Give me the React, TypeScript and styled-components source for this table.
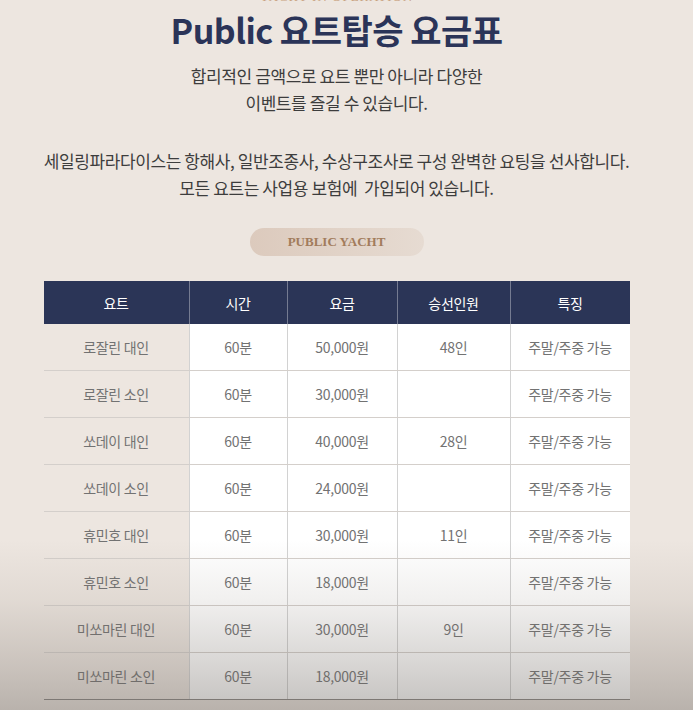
import * as React from 'react'
import styled, { createGlobalStyle } from 'styled-components'

const GlobalStyle = createGlobalStyle`
  html, body {
    margin: 0;
    padding: 0;
    background: #ede6e0;
  }
  body {
    font-family: "Noto Sans CJK KR", "Noto Sans", sans-serif;
  }
`

const Page = styled.div`
  position: relative;
  width: 693px;
  height: 710px;
  overflow: hidden;
  background: #ede6e0;
`

// content column is a bit narrower than the window (scrollbar gutter in the original)
const Column = styled.div`
  width: 673px;
  display: flex;
  flex-direction: column;
  align-items: center;
`

const Eyebrow = styled.div`
  margin-top: -10px;
  height: 12px;
  line-height: 14px;
  font-family: "Liberation Serif", serif;
  font-size: 13px;
  letter-spacing: 1px;
  color: #c8a27f;
`

const Title = styled.h1`
  margin: 8px 0 0 0;
  font-family: "Noto Sans CJK KR", sans-serif;
  font-size: 34px;
  font-weight: 700;
  line-height: 40px;
  letter-spacing: -0.5px;
  color: #2b3458;
`

const Lead = styled.p<{ $gap: number }>`
  margin: ${p => p.$gap}px 0 0 0;
  text-align: center;
  font-size: 17px;
  line-height: 27px;
  letter-spacing: -0.4px;
  color: #3d3d3d;
`

const Pill = styled.div`
  margin-top: 27px;
  width: 174px;
  height: 28px;
  border-radius: 14px;
  background: linear-gradient(90deg, #dccabd 0%, #e2d4c9 60%, #e6dbd2 100%);
  display: flex;
  align-items: center;
  justify-content: center;
  font-family: "Liberation Serif", serif;
  font-weight: 700;
  font-size: 13px;
  color: #a27c5c;
`

const Table = styled.table`
  margin-top: 25px;
  width: 586px;
  border-collapse: collapse;
  table-layout: fixed;
`

const Th = styled.th<{ $w: number }>`
  width: ${p => p.$w}px;
  height: 43px;
  background: #2b3557;
  color: #fff;
  font-weight: 400;
  font-size: 14px;
  letter-spacing: -0.3px;
  border-left: 1px solid rgba(255, 255, 255, 0.35);
  padding: 0;
  &:first-child {
    border-left: none;
  }
`

const Td = styled.td<{ $head?: boolean }>`
  height: 46px;
  padding: 0;
  text-align: center;
  font-size: 14px;
  letter-spacing: -0.3px;
  color: #727272;
  background: ${p => (p.$head ? 'transparent' : '#ffffff')};
  border-bottom: 1px solid #d4cfcb;
  border-left: ${p => (p.$head ? 'none' : '1px solid #d2d2d2')};
`

const Row = styled.tr`
  &:last-child td {
    border-bottom: 1px solid #8a8683;
  }
`

const Shade = styled.div`
  position: absolute;
  left: 0;
  right: 0;
  bottom: 0;
  height: 170px;
  pointer-events: none;
  background: linear-gradient(
    180deg,
    rgba(120, 110, 100, 0) 0%,
    rgba(120, 110, 100, 0.1) 35%,
    rgba(110, 102, 95, 0.28) 75%,
    rgba(100, 94, 88, 0.38) 100%
  );
`

const cols = [
  { label: '요트', w: 145 },
  { label: '시간', w: 97 },
  { label: '요금', w: 109 },
  { label: '승선인원', w: 112 },
  { label: '특징', w: 119 },
]

const rows = [
  ['로잘린 대인', '60분', '50,000원', '48인'],
  ['로잘린 소인', '60분', '30,000원', ''],
  ['쏘데이 대인', '60분', '40,000원', '28인'],
  ['쏘데이 소인', '60분', '24,000원', ''],
  ['휴민호 대인', '60분', '30,000원', '11인'],
  ['휴민호 소인', '60분', '18,000원', ''],
  ['미쏘마린 대인', '60분', '30,000원', '9인'],
  ['미쏘마린 소인', '60분', '18,000원', ''],
]

const App: React.FC = () => {
  return (
    <Page>
      <GlobalStyle />
      <Column>
        <Eyebrow>YACHT IN OPERATION</Eyebrow>
        <Title>Public 요트탑승 요금표</Title>
        <Lead $gap={12}>
          합리적인 금액으로 요트 뿐만 아니라 다양한
          <br />
          이벤트를 즐길 수 있습니다.
        </Lead>
        <Lead $gap={31}>
          세일링파라다이스는 항해사, 일반조종사, 수상구조사로 구성 완벽한 요팅을 선사합니다.
          <br />
          모든 요트는 사업용 보험에&nbsp; 가입되어 있습니다.
        </Lead>
        <Pill>PUBLIC YACHT</Pill>
        <Table>
          <thead>
            <tr>
              {cols.map(c => (
                <Th key={c.label} $w={c.w}>{c.label}</Th>
              ))}
            </tr>
          </thead>
          <tbody>
            {rows.map(r => (
              <Row key={r[0]}>
                <Td $head>{r[0]}</Td>
                <Td>{r[1]}</Td>
                <Td>{r[2]}</Td>
                <Td>{r[3]}</Td>
                <Td>주말/주중 가능</Td>
              </Row>
            ))}
          </tbody>
        </Table>
      </Column>
      <Shade />
    </Page>
  )
}

export default App
